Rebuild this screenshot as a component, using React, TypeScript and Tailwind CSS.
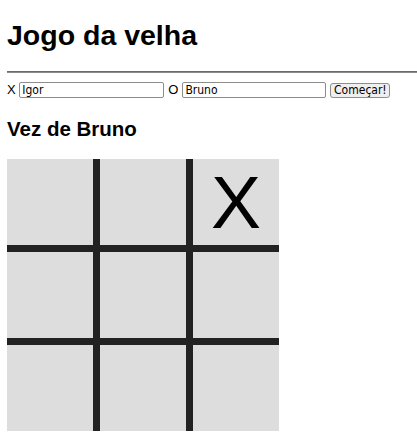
import React from "react";

export default function App() {
  const cells = ["", "", "X", "", "", "", "", "", ""];
  const ctrlFont = { fontFamily: '"DejaVu Sans Condensed", "DejaVu Sans", sans-serif' };
  return (
    <div className="min-h-[448px] bg-white pl-[7px] text-black" style={{ fontFamily: '"Liberation Sans", Arial, sans-serif' }}>
      <h1 className="mt-[19px] text-[28.5px] font-bold leading-[32px]">Jogo da velha</h1>
      <hr className="mt-[20px] h-0 border-0 border-t border-b border-t-[#6b6b6b] border-b-[#8a8a8a]" />
      <div className="mt-[9px] flex h-[16px] items-center text-[13px] leading-[16px]">
        <span>X</span>
        <input
          className="ml-[3.6px] h-[16px] w-[145px] rounded-[2px] border border-[#8d8d8d] bg-white px-[2px] text-[12px] text-black outline-none"
          style={ctrlFont}
          defaultValue="Igor"
        />
        <span className="ml-[4px]">O</span>
        <input
          className="ml-[4px] h-[16px] w-[144px] rounded-[2px] border border-[#8d8d8d] bg-white px-[2px] text-[12px] text-black outline-none"
          style={ctrlFont}
          defaultValue="Bruno"
        />
        <button
          className="ml-[4px] flex h-[15px] w-[60px] items-center justify-center rounded-[3px] border border-[#8d8d8d] bg-[#efefef] text-[12px] leading-none text-black"
          style={ctrlFont}
        >
          Começar!
        </button>
      </div>
      <h2 className="mt-[19px] text-[20.5px] font-bold leading-[24px]">Vez de Bruno</h2>
      <div className="mt-[18px] grid w-[272px] grid-cols-3 gap-[7px] bg-[#222222]">
        {cells.map((c, i) => (
          <div key={i} className="flex h-[86px] items-center justify-center bg-[#dddddd] text-[75px] leading-none">
            {c}
          </div>
        ))}
      </div>
    </div>
  );
}
